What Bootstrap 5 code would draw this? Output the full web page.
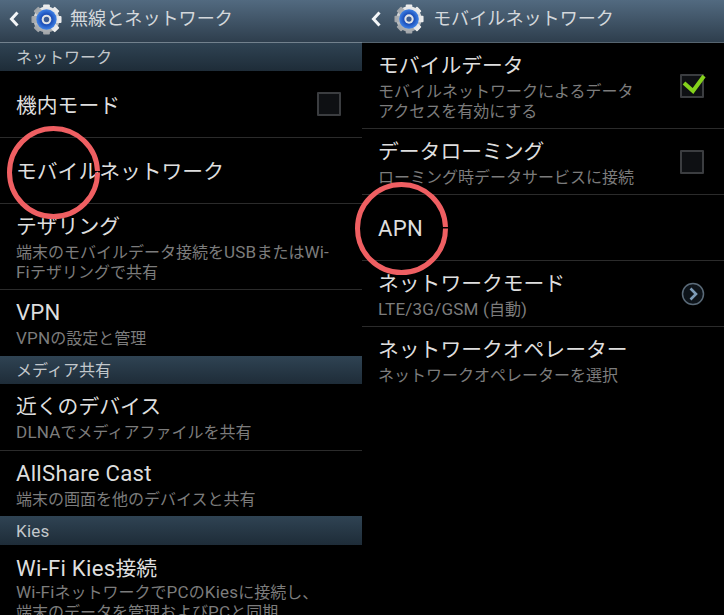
<!DOCTYPE html>
<html lang="ja">
<head>
<meta charset="utf-8">
<title>モバイルネットワーク</title>
<link href="https://cdn.jsdelivr.net/npm/bootstrap@5.3.0/dist/css/bootstrap.min.css" rel="stylesheet">
<style>
html,body{margin:0;height:615px;overflow:hidden;background:#000}
body{font-family:Roboto,"Noto Sans CJK JP",sans-serif;position:relative;width:724px}
.shot{height:615px}
.pane{width:362px;height:615px;overflow:hidden;background:#000;flex:none}
.topbar{height:43px;background:linear-gradient(#526a80,#2e3e4d);border-bottom:1px solid #72818d;color:#d4d8dc;font-size:18.1px;padding:0 0 4px 9px}
.pane-r .topbar{border-bottom-color:#56646f}
.back-ic{flex:none}
.gear-ic{flex:none;margin:0 8px 0 12px}
.pane-r .gear-ic{margin:0 9px 0 13px}
.sect{background:linear-gradient(#2f4353,#1e2c38);color:#c3c8cc;font-size:16px;padding:2px 0 0 16px;line-height:1;height:28px}
.s29{height:29px}
.rowitem{background:#000;border:0;border-bottom:1px solid #2b2b2b;border-radius:0;padding:4px 21px 0 16px;color:#dcdcdc}
.pane-r .rowitem{padding-left:16px;padding-right:20px}
.h66{height:66px}.h67{height:67px}.h65{height:65px}.h86{height:86px}
.pad-top{padding-top:12px}
.ttl{font-size:20.8px;line-height:25px;color:#dedede}
.sub{font-size:16px;line-height:20px;color:#7c7c7c;margin-top:3px}
.tight{margin-top:1px}
.lat{font-size:1.065em;letter-spacing:.012em;line-height:1}
.chk{width:24px;height:24px;border:2px solid #3b3d40;background:#0e1013;border-radius:1px;flex:none;position:relative;overflow:visible;margin-top:-4px}
.chk svg{position:absolute;left:-1px;top:-7px}
.more-ic{flex:none;margin:-4px -1px 0 0}
.ring{position:absolute;width:93px;height:93px;pointer-events:none}
.ring-a{left:7px;top:126px}
.ring-b{left:355px;top:182px}
</style>
</head>
<body>
<div class="shot d-flex">
  <section class="pane">
    <div class="topbar d-flex align-items-center">
      <svg class="back-ic" width="10" height="16" viewBox="0 0 10 16"><path d="M8.5 1.5 2.5 8l6 6.5" fill="none" stroke="#f4f6f8" stroke-width="3"/></svg>
      <svg class="gear-ic" width="31" height="31" viewBox="0 0 32 32"><use href="#gear"/></svg>
      <span>無線とネットワーク</span>
    </div>
    <div class="sect d-flex align-items-center">ネットワーク</div>
    <div class="list-group list-group-flush">
      <div class="list-group-item rowitem h67 d-flex align-items-center justify-content-between"><div class="ttl">機内モード</div><div class="chk"></div></div>
      <div class="list-group-item rowitem h66 d-flex align-items-center"><div class="ttl">モバイルネットワーク</div></div>
      <div class="list-group-item rowitem h86 d-flex flex-column justify-content-center"><div class="ttl">テザリング</div><div class="sub">端末のモバイルデータ接続を<span class="lat">USB</span>または<span class="lat">Wi-</span><br><span class="lat">Fi</span>テザリングで共有</div></div>
      <div class="list-group-item rowitem h66 d-flex flex-column justify-content-center border-0"><div class="ttl"><span class="lat">VPN</span></div><div class="sub"><span class="lat">VPN</span>の設定と管理</div></div>
    </div>
    <div class="sect d-flex align-items-center">メディア共有</div>
    <div class="list-group list-group-flush">
      <div class="list-group-item rowitem h67 d-flex flex-column justify-content-center"><div class="ttl">近くのデバイス</div><div class="sub"><span class="lat">DLNA</span>でメディアファイルを共有</div></div>
      <div class="list-group-item rowitem h65 d-flex flex-column justify-content-center border-0"><div class="ttl"><span class="lat">AllShare Cast</span></div><div class="sub">端末の画面を他のデバイスと共有</div></div>
    </div>
    <div class="sect s29 d-flex align-items-center"><span class="lat">Kies</span></div>
    <div class="list-group list-group-flush">
      <div class="list-group-item rowitem pad-top h86 d-flex flex-column border-0"><div class="ttl"><span class="lat">Wi-Fi Kies</span>接続</div><div class="sub tight"><span class="lat">Wi-Fi</span>ネットワークで<span class="lat">PC</span>の<span class="lat">Kies</span>に接続し、<br>端末のデータを管理および<span class="lat">PC</span>と同期</div></div>
    </div>
  </section>
  <section class="pane pane-r">
    <div class="topbar d-flex align-items-center">
      <svg class="back-ic" width="10" height="16" viewBox="0 0 10 16"><path d="M8.5 1.5 2.5 8l6 6.5" fill="none" stroke="#f4f6f8" stroke-width="3"/></svg>
      <svg class="gear-ic" width="30" height="30" viewBox="0 0 32 32"><use href="#gear"/></svg>
      <span>モバイルネットワーク</span>
    </div>
    <div class="list-group list-group-flush">
      <div class="list-group-item rowitem h86 d-flex align-items-center justify-content-between"><div><div class="ttl">モバイルデータ</div><div class="sub">モバイルネットワークによるデータ<br>アクセスを有効にする</div></div><div class="chk"><svg width="28" height="28" viewBox="0 0 28 28"><path d="M3 14l9 8L23 7" fill="none" stroke="#84d11c" stroke-width="4"/></svg></div></div>
      <div class="list-group-item rowitem h66 d-flex align-items-center justify-content-between"><div><div class="ttl">データローミング</div><div class="sub">ローミング時データサービスに接続</div></div><div class="chk"></div></div>
      <div class="list-group-item rowitem h66 d-flex align-items-center"><div class="ttl"><span class="lat">APN</span></div></div>
      <div class="list-group-item rowitem h66 d-flex align-items-center justify-content-between"><div><div class="ttl">ネットワークモード</div><div class="sub"><span class="lat">LTE/3G/GSM (</span>自動<span class="lat">)</span></div></div>
        <svg class="more-ic" width="24" height="24" viewBox="0 0 24 24"><circle cx="12" cy="12" r="10.5" fill="#0d1319" stroke="#5a6a78" stroke-width="1.5"/><path d="M9.5 6.5 15 12l-5.5 5.5" fill="none" stroke="#7d9cb8" stroke-width="2.6"/></svg></div>
      <div class="list-group-item rowitem h66 d-flex align-items-center"><div><div class="ttl">ネットワークオペレーター</div><div class="sub">ネットワークオペレーターを選択</div></div></div>
    </div>
  </section>
</div>
<svg class="ring ring-a" viewBox="0 0 93 93"><circle cx="46.5" cy="46.5" r="44" fill="none" stroke="#ef5f62" stroke-width="5" stroke-dasharray="274.5 2"/></svg>
<svg class="ring ring-b" viewBox="0 0 93 93"><circle cx="46.5" cy="46.5" r="44" fill="none" stroke="#ef5f62" stroke-width="5" stroke-dasharray="274.5 2"/></svg>
<svg width="0" height="0" class="position-absolute">
  <defs>
    <linearGradient id="gm" x1="0" y1="0" x2="0" y2="1"><stop offset="0" stop-color="#f0f0f0"/><stop offset="1" stop-color="#a0a4a8"/></linearGradient>
    <radialGradient id="gb"><stop offset=".5" stop-color="#1a4db8"/><stop offset="1" stop-color="#3f82e6"/></radialGradient>
    <g id="gear">
      <g fill="url(#gm)">
        <circle cx="16" cy="16" r="13.5"/>
        <rect x="12.5" y="0.5" width="7" height="31" rx="1"/>
        <rect x="12.5" y="0.5" width="7" height="31" rx="1" transform="rotate(45 16 16)"/>
        <rect x="12.5" y="0.5" width="7" height="31" rx="1" transform="rotate(90 16 16)"/>
        <rect x="12.5" y="0.5" width="7" height="31" rx="1" transform="rotate(135 16 16)"/>
      </g>
      <circle cx="16" cy="16" r="10.5" fill="url(#gb)"/>
      <circle cx="16" cy="16" r="5" fill="#dfe3e8"/>
      <circle cx="16" cy="16" r="2.8" fill="#3a5a92"/>
    </g>
  </defs>
</svg>
</body>
</html>
